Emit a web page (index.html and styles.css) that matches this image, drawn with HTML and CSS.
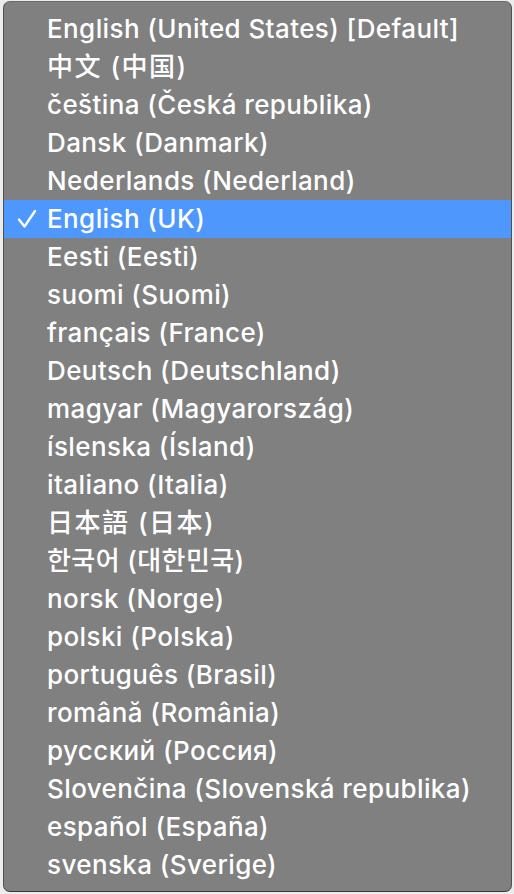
FILE: index.html
```html
<!DOCTYPE html>
<html>
<head>
<meta charset="utf-8">
<link rel="stylesheet" href="styles.css">
</head>
<body>
<div class="menu">
  <div class="item">English (United States) [Default]</div>
  <div class="item cjk">中文 (中国)</div>
  <div class="item">čeština (Česká republika)</div>
  <div class="item">Dansk (Danmark)</div>
  <div class="item">Nederlands (Nederland)</div>
  <div class="item selected"><svg class="check" width="20" height="20" viewBox="0 0 20 20"><path d="M2 10.5 L7.5 17.5 L18 2" fill="none" stroke="#ffffff" stroke-width="2.4" stroke-linecap="round" stroke-linejoin="round"/></svg>English (UK)</div>
  <div class="item">Eesti (Eesti)</div>
  <div class="item">suomi (Suomi)</div>
  <div class="item">français (France)</div>
  <div class="item">Deutsch (Deutschland)</div>
  <div class="item">magyar (Magyarország)</div>
  <div class="item">íslenska (Ísland)</div>
  <div class="item">italiano (Italia)</div>
  <div class="item cjk">日本語 (日本)</div>
  <div class="item">한국어 (대한민국)</div>
  <div class="item">norsk (Norge)</div>
  <div class="item">polski (Polska)</div>
  <div class="item">português (Brasil)</div>
  <div class="item">română (România)</div>
  <div class="item">русский (Россия)</div>
  <div class="item">Slovenčina (Slovenská republika)</div>
  <div class="item">español (España)</div>
  <div class="item">svenska (Sverige)</div>
</div>
</body>
</html>
```
FILE: styles.css
```css
html, body {
  margin: 0;
  padding: 0;
  background: #ececec;
}
body {
  padding: 1px 2px 2px 3px;
  font-family: Inter, "Noto Sans CJK SC", sans-serif;
}
.menu {
  background: #808080;
  border: 1px solid #505050;
  border-top-color: #6a6a6a;
  border-bottom-color: #3a3a3a;
  border-radius: 7px;
  padding: 8px 0 6px 0;
  box-sizing: border-box;
  height: 891px;
}
.item {
  height: 38px;
  line-height: 38px;
  padding-left: 43px;
  color: #ffffff;
  font-size: 26px;
  font-weight: 500;
  letter-spacing: 0.4px;
  white-space: nowrap;
  position: relative;
}
.cjk {
  letter-spacing: 1.5px;
}
.selected {
  background: #4d97fd;
}
.check {
  position: absolute;
  left: 13px;
  top: 9px;
}
```
